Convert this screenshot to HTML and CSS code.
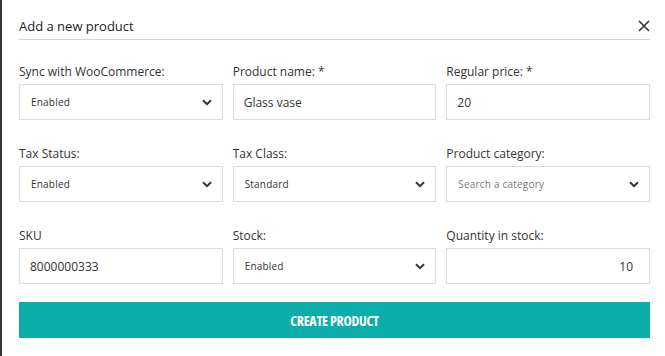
FILE: index.html
```html
<!DOCTYPE html>
<html>
<head>
<meta charset="utf-8">
<link rel="stylesheet" href="styles.css">
</head>
<body>
<div class="modal">
  <div class="header">
    <h1 class="title">Add a new product</h1>
    <button class="close" aria-label="Close">
      <svg width="12" height="12" viewBox="0 0 12 12"><path d="M1 1L11 11M11 1L1 11" stroke="#333" stroke-width="1.6" fill="none"/></svg>
    </button>
  </div>
  <div class="grid">
    <div class="field">
      <label class="label">Sync with WooCommerce:</label>
      <div class="control select"><span class="small">Enabled</span><svg class="chev" width="10" height="7" viewBox="0 0 10 7"><path d="M1 1.2L5 5.2L9 1.2" stroke="#333" stroke-width="2" fill="none"/></svg></div>
    </div>
    <div class="field">
      <label class="label">Product name: *</label>
      <div class="control"><span class="value">Glass vase</span></div>
    </div>
    <div class="field">
      <label class="label">Regular price: *</label>
      <div class="control"><span class="value">20</span></div>
    </div>
    <div class="field">
      <label class="label">Tax Status:</label>
      <div class="control select"><span class="small">Enabled</span><svg class="chev" width="10" height="7" viewBox="0 0 10 7"><path d="M1 1.2L5 5.2L9 1.2" stroke="#333" stroke-width="2" fill="none"/></svg></div>
    </div>
    <div class="field">
      <label class="label">Tax Class:</label>
      <div class="control select"><span class="small">Standard</span><svg class="chev" width="10" height="7" viewBox="0 0 10 7"><path d="M1 1.2L5 5.2L9 1.2" stroke="#333" stroke-width="2" fill="none"/></svg></div>
    </div>
    <div class="field">
      <label class="label">Product category:</label>
      <div class="control select"><span class="small placeholder">Search a category</span><svg class="chev" width="10" height="7" viewBox="0 0 10 7"><path d="M1 1.2L5 5.2L9 1.2" stroke="#333" stroke-width="2" fill="none"/></svg></div>
    </div>
    <div class="field">
      <label class="label">SKU</label>
      <div class="control"><span class="value">8000000333</span></div>
    </div>
    <div class="field">
      <label class="label">Stock:</label>
      <div class="control select"><span class="small">Enabled</span><svg class="chev" width="10" height="7" viewBox="0 0 10 7"><path d="M1 1.2L5 5.2L9 1.2" stroke="#333" stroke-width="2" fill="none"/></svg></div>
    </div>
    <div class="field">
      <label class="label">Quantity in stock:</label>
      <div class="control right"><span class="value">10</span></div>
    </div>
  </div>
  <button class="submit">CREATE PRODUCT</button>
</div>
</body>
</html>
```
FILE: styles.css
```css
html, body {
  margin: 0;
  padding: 0;
  background: #ffffff;
}
body {
  font-family: "Open Sans", "Noto Sans", sans-serif;
  color: #333;
  width: 665px;
  height: 356px;
  overflow: hidden;
}
.modal {
  box-sizing: border-box;
  height: 356px;
  border-left: 2px solid #2e3437;
  padding: 16px 15px 0 17px;
}
.header {
  display: flex;
  align-items: center;
  justify-content: space-between;
  border-bottom: 1px solid #d6d6d6;
  padding-bottom: 3px;
}
.title {
  margin: 0;
  font-size: 13px;
  font-weight: 400;
  line-height: 20px;
  color: #222;
}
.close {
  border: 0;
  background: none;
  padding: 0;
  width: 12px;
  height: 12px;
  display: flex;
}
.grid {
  display: grid;
  grid-template-columns: repeat(3, 1fr);
  column-gap: 10px;
  row-gap: 26px;
  margin-top: 24px;
}
.field {
  display: flex;
  flex-direction: column;
}
.label {
  font-size: 12px;
  line-height: 16px;
  margin-bottom: 4px;
  color: #333;
}
.control {
  box-sizing: border-box;
  height: 36px;
  border: 1px solid #dcdcdc;
  display: flex;
  align-items: center;
  padding: 0 10px;
  background: #fff;
}
.select {
  justify-content: space-between;
  padding: 0 10px 0 11px;
}
.right {
  justify-content: flex-end;
  padding-right: 16px;
}
.value {
  font-size: 12px;
  color: #333;
}
.small {
  font-size: 10px;
  color: #333;
  letter-spacing: 0.2px;
}
.placeholder {
  color: #777;
}
.chev {
  display: block;
}
.submit {
  display: block;
  width: 100%;
  height: 36px;
  margin-top: 18px;
  border: 0;
  background: #0cadaa;
  color: #fff;
  font-family: "Open Sans", sans-serif;
  font-weight: 700;
  font-size: 14px;
  font-stretch: 80%;
  letter-spacing: -0.3px;
}
```
